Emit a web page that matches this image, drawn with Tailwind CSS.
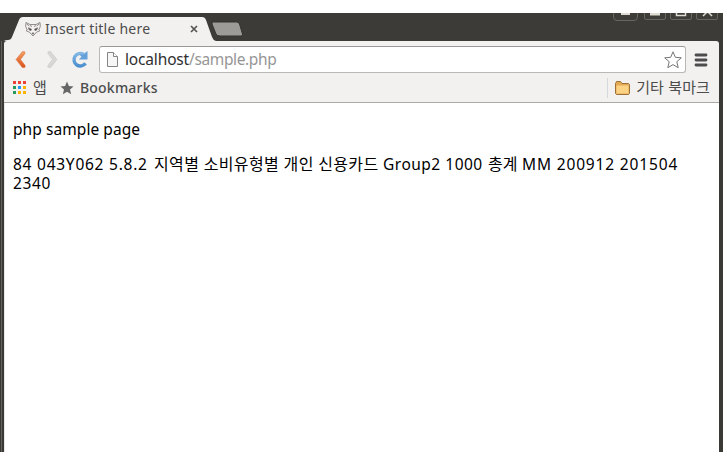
<!DOCTYPE html>
<html lang="ko">
<head>
<meta charset="utf-8">
<title>Insert title here</title>
<script src="https://cdn.jsdelivr.net/npm/@tailwindcss/browser@4"></script>
</head>
<body class="h-[465px] w-[723px] overflow-hidden bg-white py-[13px] font-['Noto_Sans','Noto_Sans_CJK_KR',sans-serif]">
<div class="flex h-[439px] w-[723px] flex-col overflow-hidden bg-[#3c3b37]">
  <!-- title bar -->
  <header class="relative flex h-7 shrink-0 items-end overflow-hidden">
    <svg class="absolute left-0 top-0" width="723" height="28" viewBox="0 0 723 28">
      <path d="M4 28q1-1 4-1 3 0 4-3l7-17q1-3 4-3h179q3 0 4 3l6 17q1 3 4 4z" fill="#f2f1f0"/>
      <path d="M213.500 9h23q2 0 3 2l3 10q.5 2-1.500 2h-21q-3 0-4-2l-4-10q-.5-2 1.500-2z" fill="#9c9b98" stroke="#33322f"/>
      <g fill="#3e3d39" stroke="#67665f">
        <rect x="613.500" y="-10.500" width="24" height="18" rx="3.500"/>
        <rect x="644.500" y="-10.500" width="21" height="17" rx="1.500"/>
        <rect x="670.500" y="-10.500" width="21" height="17" rx="1.500"/>
        <rect x="696.500" y="-10.500" width="21" height="17" rx="1.500"/>
      </g>
      <path d="M621 0h9v2h-9zM650 0h10v2.500h-10z" fill="#dfdbd2"/>
      <path d="M676.500-1v3.500h9V-1M703 3l4-4 1 0 4 4" fill="none" stroke="#dfdbd2" stroke-width="1.500"/>
    </svg>
    <div class="relative flex h-6 w-[190px] items-center pl-[25px]">
      <svg class="shrink-0" width="16" height="16" viewBox="0 0 16 16" fill="none" stroke="#77716e" stroke-width=".8">
        <path d="M1 1.500l4 2h6l4-2 .3 4-1.500 3.500 1 .8-3.300 1.400L8 15l-3.500-3.800L1.200 9.800l1-.8L.7 5.500zM1.800 3l2.500 2M14.200 3l-2.500 2M5.500 4l1 2M10.500 4l-1 2"/>
        <path d="M3.500 6.800l3 1.400-.6 1.400-1.700-.7zM12.500 6.800l-3 1.400.6 1.400 1.700-.7zM7 12h2l-1 1.300z" fill="#444"/>
      </svg>
      <span class="ml-1 w-[120px] whitespace-nowrap text-[14px] leading-6 tracking-[0.24px] text-[#4c4c4c]">Insert title here</span>
    </div>
    <svg class="relative mb-2" width="8" height="8" viewBox="0 0 8 8"><path d="M1 1l6 6M7 1L1 7" stroke="#555" stroke-width="1.700"/></svg>
  </header>
  <div class="flex flex-1">
    <div class="flex w-[4px] shrink-0"><div class="w-px bg-[#3a3935]"></div><div class="w-px bg-[#62615c]"></div><div class="w-[2px] bg-[#3a3935]"></div></div>
    <div class="flex w-[715px] flex-col rounded-t-[3px] bg-[#f2f1f0]">
      <!-- navigation -->
      <nav class="flex h-[37px] items-center">
        <svg class="ml-[10px] shrink-0" width="74" height="22" viewBox="14 8 74 22" fill="none">
          <defs>
            <linearGradient id="o" x2="0" y2="1"><stop stop-color="#f3a267"/><stop offset="1" stop-color="#d94e18"/></linearGradient>
            <linearGradient id="b" x2="0" y2="1"><stop stop-color="#82b7e5"/><stop offset="1" stop-color="#4c8fce"/></linearGradient>
          </defs>
          <path d="M24.800 10.800L22.500 10.500 16 18.500 22.500 26.700 25.200 26.200 25 24.300 20.500 18.500 25 12.500z" fill="url(#o)" stroke="#dd743f" stroke-width=".6"/>
          <path d="M48 10.800L50.500 10.500 57 18.500 50.500 26.700 47.800 26.200 48 24.300 52.500 18.500 48 12.500z" fill="#d8d7d5" stroke="#c8c7c5" stroke-width=".6"/>
          <path d="M85.500 22.300A6.300 6.300 0 1 1 83.500 13.300" stroke="url(#b)" stroke-width="3.400"/>
          <path d="M87.500 10v8.500h-8.700l2.700-2.700-2-2 3.500-.3z" fill="#65a2da"/>
        </svg>
        <div class="ml-[11px] flex h-[27px] w-[587px] shrink-0 items-center rounded-[3px] border border-[#b9b8b6] border-t-[#999897] bg-white">
          <svg class="ml-[6px]" width="14" height="17" viewBox="0 0 14 17"><path d="M1.500 1.500h6l4 4v10h-10z" fill="#f6f6f6" stroke="#858585"/><path d="M7.500 1.500v4h4" fill="white" stroke="#858585"/></svg>
          <div class="-mt-[2px] ml-[5px] flex-1 whitespace-nowrap text-[15.500px] leading-6 tracking-[-0.16px] text-[#303030]">localhost<span class="tracking-[-0.38px] text-[#969696]">/sample.php</span></div>
          <svg class="mr-[2px]" width="20" height="20" viewBox="0 0 20 20"><path d="M10 1.800l2.300 5.500 6 .5-4.500 3.900 1.400 6L10 14.600l-5.200 3.100 1.400-6L1.700 7.800l6-.5z" fill="white" stroke="#777" stroke-linejoin="round"/></svg>
        </div>
        <svg class="ml-2" width="14" height="14" viewBox="0 0 14 14"><path d="M2 2h10M2 7h10M2 12h10" stroke="#4c4c4c" stroke-width="2.800" stroke-linecap="round"/></svg>
      </nav>
      <!-- bookmarks -->
      <div class="flex h-[25px] items-center border-b border-[#aaa9a6] text-[14px] text-[#4c4c4c]">
        <svg class="ml-[9px] mb-[5px]" width="13" height="13" viewBox="0 0 13 13" shape-rendering="crispEdges"><path d="M0 0h3v3H0zM5 0h3v3H5zM10 0h3v3h-3z" fill="#ee4035"/><path d="M0 5h3v3H0zM0 10h3v3H0z" fill="#259b5b"/><path d="M5 5h3v3H5z" fill="#2696f3"/><path d="M10 5h3v3h-3z" fill="#fcb400"/><path d="M5 10h3v3H5zM10 10h3v3h-3z" fill="#fcb400"/></svg>
        <span class="mb-[5px] ml-[7px] w-[14px] whitespace-nowrap text-[15px]">앱</span>
        <svg class="mb-[4px] ml-[13px]" width="14" height="14" viewBox="0 0 14 14"><path d="M7 .5l1.900 4.500 4.600.4-3.500 3.200 1.100 4.700L7 10.800l-4.100 2.500L4 8.600.5 5.400 5.100 5z" fill="#666"/></svg>
        <span class="mb-[5px] ml-[6px] w-[90px] whitespace-nowrap font-medium tracking-[0.2px]">Bookmarks</span>
        <div class="mb-1 ml-auto h-5 w-px bg-[#d5d8de]"></div>
        <svg class="mb-[5px] ml-[7px]" width="15" height="14" viewBox="0 0 15 14"><path d="M.5 12.500v-10l1-2h4l1.500 2h6.500l1 1v9l-1 1h-12z" fill="#e3aa55" stroke="#9b7137"/><path d="M1.500 4.500h12v8h-12z" fill="#fcd384"/></svg>
        <span class="mb-[5px] ml-[6px] mr-[9px] whitespace-nowrap font-['Noto_Sans_CJK_KR',sans-serif] text-[15px] tracking-[0.1px]">기타 북마크</span>
      </div>
      <!-- page content -->
      <main class="flex-1 border-l border-[#e8e8e8] bg-white pl-2 pt-[17px] text-[15.5px] leading-[19px] text-black">
        <p class="whitespace-nowrap tracking-[0.07px]">php sample page</p>
        <p class="mt-4 flex whitespace-nowrap"><span class="w-[141px] tracking-[0.75px]">84 043Y062 5.8.2</span><span class="w-[229px] text-[16px] tracking-[0.35px]">지역별 소비유형별 개인 신용카드</span><span class="w-[105px] tracking-[0.5px]">Group2 1000</span><span class="w-[34px] text-[16px]">총계</span><span class="tracking-[0.85px]">MM 200912 201504</span></p>
        <p class="tracking-[0.6px]">2340</p>
      </main>
    </div>
    <div class="flex-1 bg-[#3a3935]"></div>
  </div>
</div>
</body>
</html>
